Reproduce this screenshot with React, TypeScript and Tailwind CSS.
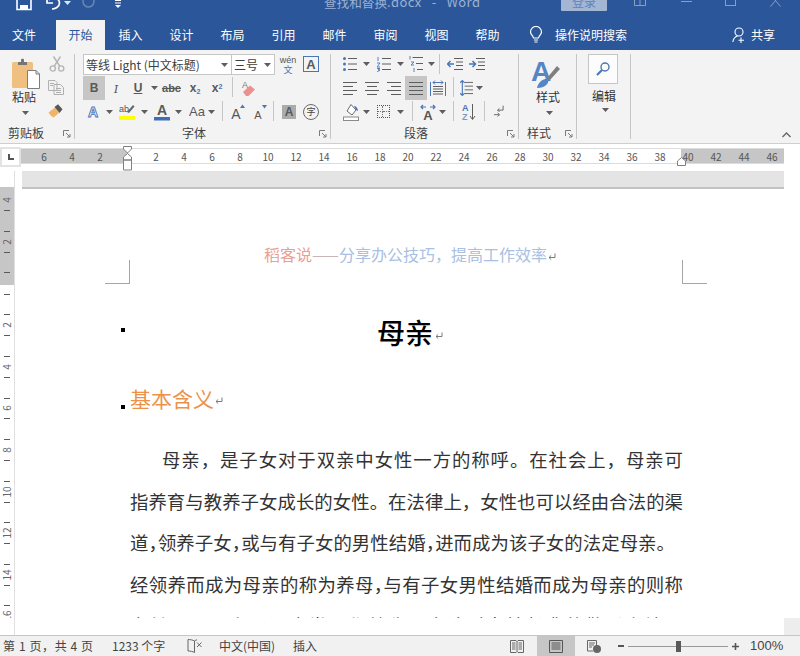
import React from "react";

const G = "#5e5e5e";
const B = "#4a76b8";

function Caret({ className = "", color = G }: { className?: string; color?: string }) {
  return (
    <svg width="7" height="4" viewBox="0 0 7 4" className={className}>
      <path d="M0 0H7L3.5 4Z" fill={color} />
    </svg>
  );
}

function Launcher({ className = "" }: { className?: string }) {
  return (
    <svg width="8" height="8" viewBox="0 0 8 8" className={className}>
      <path d="M0.5 6V0.5H6M3 3L7 7M7 4V7H4" fill="none" stroke="#7a7a7a" strokeWidth="1" />
    </svg>
  );
}

function Ret({ className = "" }: { className?: string }) {
  return (
    <svg width="8" height="8" viewBox="0 0 8 8" className={className}>
      <path d="M7 0.5V4.5H1M3.2 2.4L1 4.5L3.2 6.6" fill="none" stroke="#7a7a7a" strokeWidth="1" />
    </svg>
  );
}

function Sep({ className = "" }: { className?: string }) {
  return <div className={"w-px h-[20px] bg-[#c6c6c6] shrink-0 " + className} />;
}

function Cell({ className = "", children }: { className?: string; children?: React.ReactNode }) {
  return <div className={"flex items-center justify-center h-full shrink-0 " + className}>{children}</div>;
}

function Lines({ kind }: { kind: "l" | "c" | "r" | "j" }) {
  const ys = [1.5, 5.5, 9.5, 13.5];
  const seg = (i: number) => {
    const short = i % 2 === 1;
    if (kind === "j") return "M0 " + ys[i] + "H14";
    if (kind === "l") return "M0 " + ys[i] + "H" + (short ? 10 : 14);
    if (kind === "r") return "M" + (short ? 4 : 0) + " " + ys[i] + "H14";
    return "M" + (short ? 2 : 0) + " " + ys[i] + "H" + (short ? 12 : 14);
  };
  return (
    <svg width="14" height="15" viewBox="0 0 14 15">
      <path d={ys.map((_, i) => seg(i)).join("")} stroke={G} strokeWidth="1" fill="none" />
    </svg>
  );
}

const rulerLeft = ["6", "4", "2"];
const rulerMid = ["2","4","6","8","10","12","14","16","18","20","22","24","26","28","30","32","34","36","38"];
const rulerRight = ["40", "42", "44", "46"];
const vTop = ["4", "t", "", "t", "2", "t", "", "t"];
const vBottom = ["t","","t","2","t","","t","4","t","","t","6","t","","t","8","t","","t","10","t","","t","12","t","","t","14","t","","t","16"];

function VItem({ v }: { v: string }) {
  return (
    <div className="h-[10.4px] flex items-center justify-center shrink-0">
      {v === "t" ? (
        <div className="w-[6px] h-px bg-[#5a5a5a]" />
      ) : v ? (
        <span className="-rotate-90 text-[10px] leading-none text-[#666]">{v}</span>
      ) : null}
    </div>
  );
}

function TitleBar() {
  return (
    <div className="h-[20px] bg-[#2b579a] flex overflow-hidden relative">
      <svg width="16" height="12" viewBox="0 0 16 12" className="ml-[16px] shrink-0">
        <path d="M1 -4H13L15 -2V9.5H1Z" fill="none" stroke="#fff" strokeWidth="1.6" />
        <rect x="4" y="5" width="8" height="4.5" fill="#fff" />
      </svg>
      <svg width="16" height="12" viewBox="0 0 16 12" className="ml-[14px] shrink-0">
        <path d="M3 0C6 -3 13 -3 13.5 3C13.5 7 9 9 6 9" fill="none" stroke="#fff" strokeWidth="1.7" />
        <path d="M1 -3V3H7" fill="none" stroke="#fff" strokeWidth="1.7" />
      </svg>
      <Caret color="#dfe6f2" className="ml-[2px] mt-[1px] shrink-0" />
      <svg width="13" height="12" viewBox="0 0 13 12" className="ml-[11px] shrink-0">
        <circle cx="6.5" cy="1.5" r="5.5" fill="none" stroke="#6683b3" strokeWidth="1.6" />
      </svg>
      <svg width="8" height="12" viewBox="0 0 8 12" className="ml-[19px] shrink-0">
        <path d="M1 0.5H7M1 3H7" stroke="#fff" strokeWidth="1" />
        <path d="M1 5H7L4 8Z" fill="#fff" />
      </svg>
      <div className="ml-[202px] w-[150px] -mt-[6px] h-[16px] leading-[16px] text-[12.6px] text-[#9db1d2] whitespace-pre shrink-0">查找和替换<span className="text-[13px] tracking-[0.4px]">.docx   -   Word</span></div>
      <div className="ml-[87px] w-[46px] h-[11px] bg-[#a3b6d4] rounded-b-[1px] shrink-0 overflow-hidden flex justify-center">
        <span className="-mt-[6px] text-[12px] leading-[16px] text-[#5f83ba]">登录</span>
      </div>
      <svg width="12" height="6" viewBox="0 0 12 6" className="ml-[27px] shrink-0">
        <path d="M0.5 0V5.5H11.5V0M6 5V0" fill="none" stroke="#88a0c6" strokeWidth="1" />
      </svg>
      <div className="ml-[35px] mt-[1px] w-[11px] h-px bg-[#88a0c6] shrink-0" />
      <div className="ml-[33px] w-[11px] h-[6px] border-x border-b border-[#88a0c6] shrink-0" />
      <svg width="11" height="7" viewBox="0 0 11 7" className="ml-[34px] shrink-0">
        <path d="M0.5 6.5L6 0M10.5 6.5L5 0" fill="none" stroke="#88a0c6" strokeWidth="1" />
      </svg>
    </div>
  );
}

function Tabs() {
  const rest = ["插入", "设计", "布局", "引用", "邮件", "审阅", "视图", "帮助"];
  return (
    <div className="h-[30px] bg-[#2b579a] flex items-stretch text-[12px] text-white">
      <div className="w-[48px] flex items-center justify-center">文件</div>
      <div className="ml-[8px] w-[49px] flex items-center justify-center bg-[#f3f3f3] text-[#2b579a]">开始</div>
      {rest.map((t) => (
        <div key={t} className="w-[51px] flex items-center justify-center">{t}</div>
      ))}
      <svg width="14" height="18" viewBox="0 0 14 18" className="ml-[16px] self-center shrink-0">
        <path d="M4.5 12C4 9.5 1.5 8.5 1.5 6A5.5 5.5 0 0 1 12.5 6C12.5 8.5 10 9.5 9.5 12ZM5 14H9M5.5 16H8.5" fill="none" stroke="#fff" strokeWidth="1.2" />
      </svg>
      <div className="ml-[12px] flex items-center">操作说明搜索</div>
      <svg width="16" height="16" viewBox="0 0 16 16" className="ml-[105px] self-center shrink-0">
        <circle cx="7" cy="5" r="4" fill="none" stroke="#fff" strokeWidth="1.1" />
        <path d="M0.8 15C1.5 11 3.5 9.5 5.5 9M9 10.5V16M6.5 13.2H12" fill="none" stroke="#fff" strokeWidth="1.1" />
      </svg>
      <div className="ml-[3px] flex items-center">共享</div>
    </div>
  );
}

function GroupLabel({ text, launcher, textClass }: { text: string; launcher?: boolean; textClass: string }) {
  return (
    <div className="absolute left-0 right-0 -bottom-[2px] h-[16px] text-[12px] leading-[16px] text-[#3f3f3f]">
      <span className={"absolute whitespace-nowrap " + textClass}>{text}</span>
      {launcher && <Launcher className="absolute right-[3px] top-[5px]" />}
    </div>
  );
}

function Clipboard() {
  return (
    <div className="relative w-[75px] h-full border-r border-[#c6c6c6] flex shrink-0">
      <div className="w-[48px] pl-[12px] pt-[4px] flex flex-col items-start">
        <svg width="28" height="32" viewBox="0 0 28 32" className="shrink-0">
          <rect x="0" y="4" width="21" height="26" rx="1.5" fill="#efc07f" />
          <path d="M6 7V4H9V1.5C9 0.5 12 0.5 12 1.5V4H15V7Z" fill="#757575" />
          <path d="M15.5 12.5H24L27.5 16V30.5H15.5Z" fill="#fff" stroke="#7d7d7d" />
          <path d="M24 12.5V16H27.5" fill="none" stroke="#7d7d7d" />
        </svg>
        <div className="-mt-[1px] text-[12px] leading-[16px] text-[#333]">粘贴</div>
        <Caret className="mt-[6px] ml-[10px]" />
      </div>
      <div className="pt-[2px] flex flex-col items-start">
        <svg width="16" height="16" viewBox="0 0 16 16" className="ml-px shrink-0">
          <circle cx="3.8" cy="12.5" r="2.6" fill="none" stroke="#b5b5b5" strokeWidth="1.4" />
          <circle cx="12.2" cy="12.5" r="2.6" fill="none" stroke="#b5b5b5" strokeWidth="1.4" />
          <path d="M5 10.5L11.5 0.5M11 10.5L4.5 0.5" stroke="#b5b5b5" strokeWidth="1.4" />
        </svg>
        <svg width="16" height="15" viewBox="0 0 16 15" className="mt-[8px] shrink-0">
          <path d="M0.5 0.5H7L9 2.5V10.5H0.5ZM6 4.5H12.5L15.5 7.5V14.5H6Z" fill="#f3f3f3" stroke="#b0b0b0" />
          <path d="M2 3.5H6M2 5.5H5M8 8.5H13M8 10.5H13M8 12.5H13" stroke="#b0b0b0" />
        </svg>
        <svg width="16" height="15" viewBox="0 0 16 15" className="mt-[8px] shrink-0">
          <path d="M0.5 9.5L7 4.5L11 10L5.5 14.5C4 14 1.5 11.5 0.5 9.5Z" fill="#efb36a" />
          <path d="M6.5 4L10 1.2L14.5 6.2L11.5 10Z" fill="#585858" />
        </svg>
      </div>
      <GroupLabel text="剪贴板" launcher textClass="left-[8px]" />
    </div>
  );
}

function Btn({ children, className = "" }: { children?: React.ReactNode; className?: string }) {
  return <Cell className={className}>{children}</Cell>;
}

function Txt({ children, className = "" }: { children: React.ReactNode; className?: string }) {
  return <span className={"font-['Liberation_Sans',sans-serif] leading-none text-[#595959] " + className}>{children}</span>;
}

function FontGroup() {
  return (
    <div className="relative w-[256px] h-full border-r border-[#c6c6c6] shrink-0 pl-[8px]">
      <div className="h-[22px] flex">
        <div className="w-[149px] h-[21px] bg-white border border-[#c6c6c6] flex items-center pl-[2px] pr-[3px] text-[12px] text-[#404040]">
          <span className="flex-1 whitespace-nowrap">等线 Light (中文标题)</span>
          <Caret />
        </div>
        <div className="-ml-px w-[44px] h-[21px] bg-white border border-[#c6c6c6] flex items-center pl-[2px] pr-[3px] text-[12px] text-[#404040]">
          <span className="flex-1">三号</span>
          <Caret />
        </div>
        <Btn className="ml-[4px] w-[18px] flex-col">
          <span className="text-[9px] leading-[9px] text-[#555] font-['Liberation_Sans',sans-serif]">wén</span>
          <span className="text-[9px] leading-[10px] text-[#3f73b5]">文</span>
        </Btn>
        <Btn className="ml-[6px] w-[16px]">
          <div className="w-[16px] h-[16px] border border-[#4a76b8] flex items-center justify-center mb-[2px]">
            <Txt className="text-[13px] font-bold">A</Txt>
          </div>
        </Btn>
      </div>
      <div className="h-[24px] flex">
        <Btn className="w-[22px] bg-[#c6c6c6]"><Txt className="text-[12px] font-bold">B</Txt></Btn>
        <Btn className="w-[22px]"><Txt className="text-[13px] italic font-serif">I</Txt></Btn>
        <Btn className="w-[22px]"><Txt className="text-[12px] font-bold underline">U</Txt></Btn>
        <Btn className="w-[10px]"><Caret /></Btn>
        <Btn className="w-[25px]"><Txt className="text-[11px] line-through font-bold">abc</Txt></Btn>
        <Btn className="w-[22px]"><Txt className="text-[12px] font-bold">x<sub className="text-[7px] text-[#4a76b8]">2</sub></Txt></Btn>
        <Btn className="w-[22px]"><Txt className="text-[12px] font-bold">x<sup className="text-[7px] text-[#4a76b8]">2</sup></Txt></Btn>
        <Sep className="ml-[4px] mt-[1px]" />
        <Btn className="ml-[8px] w-[16px]">
          <svg width="16" height="17" viewBox="0 0 16 17">
            <text x="1" y="8" fontFamily="Liberation Sans" fontSize="9" fill="#777">A</text>
            <path d="M2 12L9 5.5L14 9.5L7.5 16H5Z" fill="#ee8f8f" />
          </svg>
        </Btn>
      </div>
      <div className="h-[23px] flex">
        <Btn className="ml-[3px] w-[14px]">
          <svg width="15" height="17" viewBox="0 0 15 17">
            <text x="7.5" y="14" textAnchor="middle" fontFamily="Liberation Sans" fontWeight="700" fontSize="15" fill="#fff" stroke="#4a76b8" strokeWidth="1">A</text>
          </svg>
        </Btn>
        <Btn className="ml-[5px] w-[8px]"><Caret /></Btn>
        <Btn className="ml-[6px] w-[16px] flex-col">
          <svg width="16" height="17" viewBox="0 0 16 17">
            <text x="0" y="9" fontFamily="Liberation Sans" fontSize="9" fill="#555">ab</text>
            <path d="M8 9L14 2L15.5 3.5L10 10Z" fill="#666" />
            <rect x="0" y="13" width="16" height="4" fill="#ffff00" />
          </svg>
        </Btn>
        <Btn className="ml-[5px] w-[8px]"><Caret /></Btn>
        <Btn className="ml-[6px] w-[16px]">
          <svg width="16" height="18" viewBox="0 0 16 18">
            <text x="8" y="12" textAnchor="middle" fontFamily="Liberation Sans" fontWeight="700" fontSize="14" fill="#5a5a5a">A</text>
            <rect x="0" y="14" width="16" height="3.5" fill="#3f6eb5" />
          </svg>
        </Btn>
        <Btn className="ml-[4px] w-[8px]"><Caret /></Btn>
        <Btn className="ml-[6px] w-[18px]"><Txt className="text-[13px] font-normal text-[#666]">Aa</Txt></Btn>
        <Btn className="ml-[1px] w-[9px]"><Caret /></Btn>
        <Sep className="ml-[6px] mt-[1px]" />
        <Btn className="ml-[8px] w-[14px]">
          <svg width="14" height="16" viewBox="0 0 14 16">
            <text x="5" y="15" textAnchor="middle" fontFamily="Liberation Sans" fontSize="14" fill="#555">A</text>
            <path d="M9 4L11.5 0.5L14 4Z" fill="#4a76b8" />
          </svg>
        </Btn>
        <Btn className="ml-[8px] w-[14px]">
          <svg width="14" height="16" viewBox="0 0 14 16">
            <text x="5" y="15" textAnchor="middle" fontFamily="Liberation Sans" fontSize="11" fill="#555">A</text>
            <path d="M9 1H14L11.5 4.5Z" fill="#4a76b8" />
          </svg>
        </Btn>
        <Sep className="ml-[6px] mt-[1px]" />
        <Btn className="ml-[8px] w-[14px]">
          <div className="w-[14px] h-[14px] bg-[#ababab] flex items-center justify-center"><Txt className="text-[12px] font-bold text-[#404040]">A</Txt></div>
        </Btn>
        <Btn className="ml-[7px] w-[16px]">
          <div className="w-[16px] h-[16px] rounded-full border border-[#6a6a6a] flex items-center justify-center text-[9px] text-[#444]">字</div>
        </Btn>
      </div>
      <GroupLabel text="字体" launcher textClass="left-[107px]" />
    </div>
  );
}

function ListIcon({ kind }: { kind: "b" | "n" | "m" }) {
  return (
    <svg width="14" height="16" viewBox="0 0 14 16">
      {kind === "b" ? (
        <>
          <circle cx="1.5" cy="2.5" r="1.5" fill={B} />
          <circle cx="1.5" cy="8" r="1.5" fill={B} />
          <circle cx="1.5" cy="13.5" r="1.5" fill={B} />
          <path d="M5 2.5H14M5 8H14M5 13.5H14" stroke={G} />
        </>
      ) : kind === "n" ? (
        <>
          <path d="M1 1V5M0 7H3L0 11H3M0 12.5H3L1 14H3L0 16" fill="none" stroke={B} strokeWidth="0.9" />
          <path d="M5 2.5H14M5 8H14M5 13.5H14" stroke={G} />
        </>
      ) : (
        <>
          <path d="M1 0V3.5M2 6H5L2 9H5M5 12V16" fill="none" stroke={B} strokeWidth="0.9" />
          <path d="M3.5 1.5H14M7 7.5H14M8 13.5H14" stroke={G} />
        </>
      )}
    </svg>
  );
}

function Para() {
  return (
    <div className="relative w-[188px] h-full border-r border-[#c6c6c6] shrink-0">
      <div className="h-[22px] flex pb-[2px]">
        <Btn className="ml-[12px] w-[14px]"><ListIcon kind="b" /></Btn>
        <Btn className="ml-[5px] w-[8px]"><Caret /></Btn>
        <Btn className="ml-[7px] w-[14px]"><ListIcon kind="n" /></Btn>
        <Btn className="ml-[5px] w-[8px]"><Caret /></Btn>
        <Btn className="ml-[5px] w-[14px]"><ListIcon kind="m" /></Btn>
        <Btn className="ml-[4px] w-[8px]"><Caret /></Btn>
        <Sep className="ml-[4px]" />
        <Btn className="ml-[7px] w-[16px]">
          <svg width="16" height="14" viewBox="0 0 16 14">
            <path d="M7 1.5H16M9 5H16M9 8.5H16M7 12.5H16" stroke={G} />
            <path d="M7 7H1M3.5 4L0.5 7L3.5 10" fill="none" stroke={B} strokeWidth="1.5" />
          </svg>
        </Btn>
        <Btn className="ml-[6px] w-[16px]">
          <svg width="16" height="14" viewBox="0 0 16 14">
            <path d="M7 1.5H16M9 5H16M9 8.5H16M7 12.5H16" stroke={G} />
            <path d="M0 7H6.5M3.5 4L6.5 7L3.5 10" fill="none" stroke={B} strokeWidth="1.5" />
          </svg>
        </Btn>
      </div>
      <div className="h-[24px] flex">
        <Btn className="ml-[12px] w-[14px]"><Lines kind="l" /></Btn>
        <Btn className="ml-[8px] w-[14px]"><Lines kind="c" /></Btn>
        <Btn className="ml-[8px] w-[14px]"><Lines kind="r" /></Btn>
        <Btn className="ml-[4px] w-[22px] bg-[#c6c6c6]"><Lines kind="j" /></Btn>
        <Btn className="w-[22px]">
          <svg width="16" height="17" viewBox="0 0 16 17">
            <path d="M0.5 2V16M15.5 2V16" stroke={B} />
            <path d="M3 2.5H13M5 0.5L3 2.5L5 4.5M11 0.5L13 2.5L11 4.5" fill="none" stroke={B} />
            <path d="M3 6.5H13M3 9H13M3 11.5H13M3 14H13" stroke={G} />
          </svg>
        </Btn>
        <Sep className="ml-[4px] mt-px" />
        <Btn className="ml-[6px] w-[13px]">
          <svg width="14" height="18" viewBox="0 0 14 18">
            <path d="M5 3H14M5 7H14M5 11H14M5 15H14" stroke={G} />
            <path d="M2.5 1V17M0 3.5L2.5 1L5 3.5M0 14.5L2.5 17L5 14.5" fill="none" stroke={B} strokeWidth="1.2" />
          </svg>
        </Btn>
        <Btn className="ml-[2px] w-[8px]"><Caret /></Btn>
      </div>
      <div className="h-[23px] flex">
        <Btn className="ml-[12px] w-[16px]">
          <svg width="16" height="18" viewBox="0 0 16 18">
            <path d="M4 8L8 1.5L13 7L9 12Z" fill="#fff" stroke="#6a6a6a" />
            <path d="M11 3C13 3 15 5 15 8L13 7Z" fill={B} />
            <rect x="0.5" y="14" width="15" height="3.5" fill="#fff" stroke="#8a8a8a" />
          </svg>
        </Btn>
        <Btn className="ml-[3px] w-[8px]"><Caret /></Btn>
        <Btn className="ml-[6px] w-[14px]">
          <div className="w-[13px] h-[13px] border border-dotted border-[#555] grid grid-cols-2">
            <div className="border-r border-b border-dotted border-[#777]" />
            <div className="border-b border-dotted border-[#777]" />
            <div className="border-r border-dotted border-[#777]" />
            <div />
          </div>
        </Btn>
        <Btn className="ml-[6px] w-[8px]"><Caret /></Btn>
        <Sep className="ml-[8px] mt-px" />
        <Btn className="ml-[7px] w-[16px]">
          <svg width="16" height="18" viewBox="0 0 16 18">
            <path d="M1 4H6M3 2L1 4L3 6M15 4H10M13 2L15 4L13 6" fill="none" stroke={B} strokeWidth="1.2" />
            <text x="8" y="17" textAnchor="middle" fontFamily="Liberation Sans" fontWeight="700" fontSize="13" fill="#555">A</text>
          </svg>
        </Btn>
        <Btn className="ml-[2px] w-[8px]"><Caret /></Btn>
        <Sep className="ml-[7px] mt-px" />
        <Btn className="ml-[8px] w-[14px]">
          <svg width="14" height="18" viewBox="0 0 14 18">
            <text x="0" y="8" fontFamily="Liberation Sans" fontSize="9" fontWeight="700" fill={B}>A</text>
            <text x="0" y="17" fontFamily="Liberation Sans" fontSize="9" fontWeight="700" fill="#7a9acb">Z</text>
            <path d="M10.5 1V16M8 13L10.5 16.5L13 13" fill="none" stroke={G} />
          </svg>
        </Btn>
        <Sep className="ml-[8px] mt-px" />
        <Btn className="ml-[9px] w-[10px]">
          <svg width="11" height="13" viewBox="0 0 11 13">
            <path d="M10 0V5H4M6 3L4 5L6 7M0 10H6M4 8L6 10L4 12" fill="none" stroke={G} strokeWidth="1" />
          </svg>
        </Btn>
      </div>
      <GroupLabel text="段落" launcher textClass="left-[73px]" />
    </div>
  );
}

function Styles() {
  return (
    <div className="relative w-[58px] h-full border-r border-[#c6c6c6] shrink-0 pt-[4px] flex flex-col">
      <svg width="30" height="30" viewBox="0 0 30 30" className="ml-[11px] shrink-0">
        <text x="11" y="23" textAnchor="middle" fontFamily="Liberation Sans" fontWeight="700" fontSize="28" fill="#5585c2">A</text>
        <path d="M17 20L27 8L30 11L20 22Z" fill="#7f7f7f" />
        <path d="M7 30C8 24 14 20 18 21C20 25 15 30 7 30Z" fill="#5585c2" />
      </svg>
      <div className="ml-[17px] mt-px text-[12px] leading-[16px] text-[#333]">样式</div>
      <Caret className="ml-[27px] mt-[6px]" />
      <GroupLabel text="样式" launcher textClass="left-[8px]" />
    </div>
  );
}

function Editing() {
  return (
    <div className="w-[54px] h-full border-r border-[#c6c6c6] shrink-0 flex flex-col">
      <div className="ml-[11px] w-[30px] h-[30px] bg-[#fcfcfc] border border-[#c6c6c6] flex items-center justify-center shrink-0">
        <svg width="14" height="14" viewBox="0 0 14 14">
          <circle cx="9" cy="5" r="4" fill="none" stroke="#4a76b8" strokeWidth="1.4" />
          <path d="M6 8L1 13" stroke="#4a76b8" strokeWidth="2.2" />
        </svg>
      </div>
      <div className="ml-[15px] mt-[4px] text-[12px] leading-[16px] text-[#333]">编辑</div>
      <Caret className="ml-[25px] mt-[4px]" />
    </div>
  );
}

function Ribbon() {
  return (
    <div className="relative h-[94px] bg-[#f3f3f3] border-b border-[#cfcfcf] flex pt-[4px] pb-[4px]">
      <Clipboard />
      <FontGroup />
      <Para />
      <Styles />
      <Editing />
      <svg width="9" height="6" viewBox="0 0 9 6" className="absolute right-[9px] bottom-[5px]">
        <path d="M0.5 5L4.5 1L8.5 5" fill="none" stroke="#666" strokeWidth="1.4" />
      </svg>
    </div>
  );
}

function RulerRow() {
  return (
    <div className="relative h-[27px] bg-white flex items-start pt-[3px] text-[10px] text-[#555]">
      <div className="w-[21px] h-[20px] border-2 border-[#e3e3e3] flex items-center justify-center shrink-0">
        <div className="w-[6px] h-[6px] border-l-2 border-b-2 border-[#555]" />
      </div>
      <div className="w-[763px] h-[16px] mt-px border-y border-[#dcdcdc] flex overflow-hidden">
        <div className="w-[107px] bg-[#c6c6c6] flex pl-[9px] shrink-0">
          {rulerLeft.map((n) => (
            <div key={n} className="w-[28px] flex items-center justify-center">{n}</div>
          ))}
        </div>
        <div className="w-[553px] bg-white flex pl-[14px] shrink-0">
          {rulerMid.map((n) => (
            <div key={n} className="w-[28px] flex items-center justify-center shrink-0">{n}</div>
          ))}
        </div>
        <div className="w-[103px] bg-[#c6c6c6] flex shrink-0">
          {rulerRight.map((n, i) => (
            <div key={n} className={"w-[28px] flex items-center justify-center shrink-0 " + (i === 0 ? "-ml-[7px]" : "")}>{n}</div>
          ))}
        </div>
      </div>
      <svg width="10" height="25" viewBox="0 0 10 25" className="absolute left-[123px] top-[2px]">
        <path d="M0.5 0.5H8.5V3L4.5 7L0.5 3Z M0.5 14V11L4.5 7.5L8.5 11V14Z M0.5 14H8.5V24H0.5Z" fill="#fff" stroke="#808080" />
      </svg>
      <svg width="10" height="9" viewBox="0 0 10 9" className="absolute left-[677px] top-[13px]">
        <path d="M0.5 8.5V4L4.5 0.5L8.5 4V8.5Z" fill="#fff" stroke="#808080" />
      </svg>
    </div>
  );
}

const comma = "tracking-[-9px]";

function Body() {
  return (
    <div className="relative ml-[115px] w-[553px] font-['Noto_Sans_CJK_SC',sans-serif]">
      <div className="pt-[53px] pl-[7px] h-[77px] text-center text-[16px] leading-[24px] whitespace-nowrap">
        <span className="text-[#e7a195]">稻客说</span>
        <span className="text-[#c9b5b5]">——</span>
        <span className="text-[#a9c0e2]">分享办公技巧，提高工作效率</span>
        <Ret className="inline-block ml-[1px]" />
      </div>
      <div className="relative mt-[46px] h-[40px] pl-[7px] text-center text-[28px] leading-[40px] font-medium text-black">
        母亲<Ret className="inline-block ml-[2px]" />
        <div className="absolute -left-[9px] top-[16px] w-[4px] h-[4px] bg-black" />
      </div>
      <div className="relative mt-[31px] h-[30px] text-[21px] leading-[30px] text-[#ec9248]">
        基本含义<Ret className="inline-block ml-[1px]" />
        <div className="absolute -left-[9px] top-[22px] w-[4px] h-[4px] bg-black" />
      </div>
      <div className="mt-[26px] text-[18.4px] text-[#333] [text-align:justify] [text-align-last:justify]">
        <p className="h-[41.7px] leading-[41.7px] pl-[32px] overflow-hidden">母亲，是子女对于双亲中女性一方的称呼。在社会上，母亲可</p>
        <p className="h-[41.7px] leading-[41.7px] overflow-hidden">指养育与教养子女成长的女性。在法律上，女性也可以经由合法的渠</p>
        <p className="h-[41.7px] leading-[41.7px] pr-[8px] overflow-hidden">道<span className={comma}>，</span>领养子女<span className={comma}>，</span>或与有子女的男性结婚<span className={comma}>，</span>进而成为该子女的法定母亲。</p>
        <p className="h-[41.7px] leading-[41.7px] overflow-hidden">经领养而成为母亲的称为养母<span className={comma}>，</span>与有子女男性结婚而成为母亲的则称</p>
        <p className="h-[41.7px] leading-[41.7px] -mt-[1px] overflow-hidden">为继母。母亲一词也常用作尊称，表达对女性长辈的敬爱之情。</p>
      </div>
    </div>
  );
}

function Main() {
  return (
    <div className="h-[464px] flex bg-white">
      <div className="w-[15px] h-full pt-[16px] pb-[17px] flex flex-col shrink-0 border-r border-[#e0e0e0]">
        <div className="h-[98px] bg-[#c6c6c6] pt-[8px] overflow-hidden shrink-0">
          {vTop.map((v, i) => (
            <VItem key={i} v={v} />
          ))}
        </div>
        <div className="flex-1 pt-[4px] overflow-hidden flex flex-col">
          {vBottom.map((v, i) => (
            <VItem key={i} v={v} />
          ))}
        </div>
      </div>
      <div className="relative w-[769px] h-[447px] overflow-hidden shrink-0">
        <div className="ml-[7px] h-[18px] bg-[#e4e4e4] border-b-2 border-[#c2c2c2]" />
        <div className="absolute left-[90px] top-[89px] w-[25px] h-[24px] border-r border-b border-[#a6a6a6]" />
        <div className="absolute left-[667px] top-[89px] w-[25px] h-[24px] border-l border-b border-[#a6a6a6]" />
        <Body />
      </div>
      <div className="flex-1 flex flex-col justify-end">
        <div className="h-[17px] bg-[#ededed]" />
      </div>
    </div>
  );
}

function StatusBar() {
  return (
    <div className="h-[21px] bg-[#f1f1f1] border-t border-[#c6c6c6] flex items-center text-[12px] text-[#444]">
      <span className="ml-[3px] w-[90px] whitespace-pre shrink-0 tracking-[0.6px]">第 1 页，共 4 页</span>
      <span className="ml-[19px] w-[56px] whitespace-pre shrink-0">1233 个字</span>
      <svg width="16" height="14" viewBox="0 0 16 14" className="ml-[19px] shrink-0">
        <path d="M7.5 2C6 1 3 0.5 1 0.5V12C3 12 6 12.5 7.5 13.5V2M7.5 2C8 1.5 9 1 10 0.8" fill="none" stroke="#666" />
        <path d="M10 3.5L14.5 8M14.5 3.5L10 8" stroke="#666" />
      </svg>
      <span className="ml-[16px] w-[56px] whitespace-nowrap shrink-0">中文(中国)</span>
      <span className="ml-[18px] w-[24px] shrink-0">插入</span>
      <svg width="14" height="13" viewBox="0 0 14 13" className="ml-[193px] shrink-0">
        <path d="M0.5 0.5H6L7 1.5L8 0.5H13.5V12.5H8L7 11.5L6 12.5H0.5ZM7 1.5V11.5M2 3H5.5M2 5H5.5M2 7H5.5M2 9H5.5M8.5 3H12M8.5 5H12M8.5 7H12M8.5 9H12" fill="none" stroke="#666" />
      </svg>
      <div className="ml-[13px] w-[38px] h-full bg-[#c6c6c6] flex items-center justify-center shrink-0">
        <svg width="14" height="13" viewBox="0 0 14 13">
          <path d="M0.5 0.5H13.5V12.5H0.5ZM2.5 3H11.5M2.5 5H11.5M2.5 7H11.5M2.5 9H11.5" fill="none" stroke="#555" />
        </svg>
      </div>
      <svg width="14" height="13" viewBox="0 0 14 13" className="ml-[12px] shrink-0">
        <path d="M0.5 0.5H9.5V6M2 3H8M2 5H7M2 7H5M0.5 0.5V11H6" fill="none" stroke="#666" />
        <circle cx="10" cy="9" r="4" fill="#666" />
      </svg>
      <div className="ml-[17px] w-[6px] h-[2px] bg-[#555] shrink-0" />
      <div className="ml-[4px] w-[100px] h-px bg-[#9a9a9a] flex justify-center items-center shrink-0 relative">
        <div className="w-[5px] h-[11px] bg-[#5a5a5a]" />
      </div>
      <svg width="7" height="7" viewBox="0 0 7 7" className="ml-[4px] shrink-0">
        <path d="M3.5 0V7M0 3.5H7" stroke="#555" strokeWidth="1.6" />
      </svg>
      <span className="ml-[11px] whitespace-nowrap font-['Liberation_Sans',sans-serif] text-[13px]">100%</span>
    </div>
  );
}

export default function App() {
  return (
    <div className="w-[800px] h-[656px] overflow-hidden bg-white font-['Noto_Sans_CJK_SC','Liberation_Sans',sans-serif]">
      <TitleBar />
      <Tabs />
      <Ribbon />
      <RulerRow />
      <Main />
      <StatusBar />
    </div>
  );
}
